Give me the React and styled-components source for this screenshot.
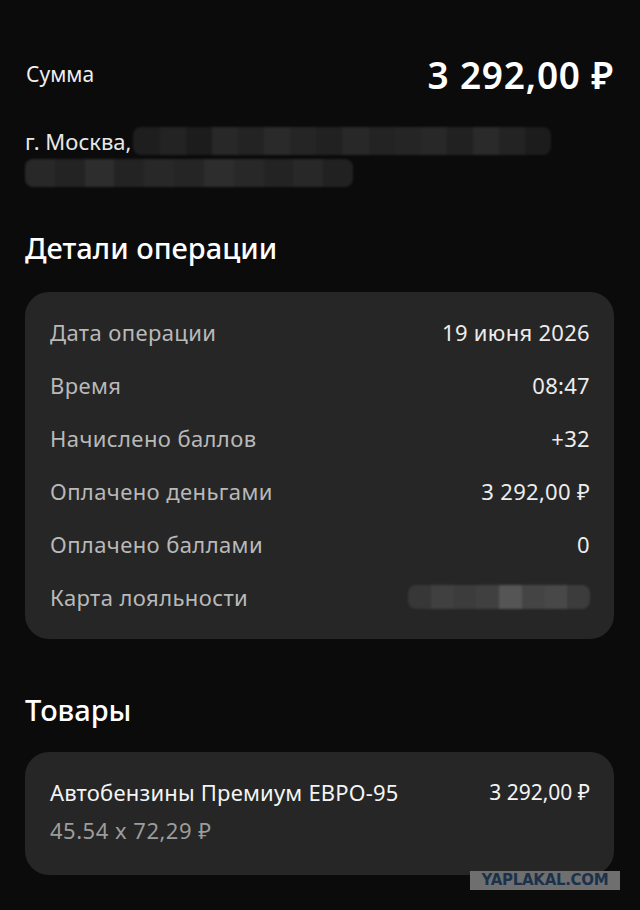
import styled, { createGlobalStyle } from 'styled-components';

const GlobalStyle = createGlobalStyle`
   html, body {
      margin: 0;
      background: #0b0b0b;
   }
   body {
      font-family: "Noto Sans", "Open Sans", sans-serif;
      color: #f2f2f2;
   }
`;

const details = [
   { label: 'Дата операции', value: '19 июня 2026' },
   { label: 'Время', value: '08:47' },
   { label: 'Начислено баллов', value: '+32' },
   { label: 'Оплачено деньгами', value: '3 292,00 ₽' },
   { label: 'Оплачено баллами', value: '0' },
   { label: 'Карта лояльности', hidden: true },
];

const addressBlur = [0.08, 0.1, 0.07, 0.12, 0.1, 0.13, 0.11, 0.09, 0.12, 0.1, 0.11, 0.12, 0.09, 0.13, 0.1, 0.07];
const addressBlur2 = [0.12, 0.1, 0.14, 0.1, 0.12, 0.11, 0.14, 0.12, 0.1, 0.12, 0.09];
const cardBlur = [0.08, 0.12, 0.1, 0.12, 0.22, 0.14, 0.16, 0.1];

function Blur({ cells, width, height }) {
   return (
      <Smudge $w={width} $h={height}>
         {cells.map((c, i) => (
            <Cell key={i} style={{ background: `rgba(255,255,255,${c})` }} />
         ))}
      </Smudge>
   );
}

function App() {
   return (
      <>
         <GlobalStyle />
         <Page>
            <SumRow>
               <SumLabel>Сумма</SumLabel>
               <SumValue>3 292,00 ₽</SumValue>
            </SumRow>

            <Address>
               <AddressLine>
                  <span>г. Москва,</span>
                  <Blur cells={addressBlur} width={418} height={28} />
               </AddressLine>
               <Blur cells={addressBlur2} width={328} height={28} />
            </Address>

            <Heading $top={41}>Детали операции</Heading>
            <Card>
               {details.map((d) => (
                  <Row key={d.label}>
                     <Label>{d.label}</Label>
                     {d.hidden ? (
                        <Blur cells={cardBlur} width={182} height={24} />
                     ) : (
                        <Value>{d.value}</Value>
                     )}
                  </Row>
               ))}
            </Card>

            <Heading $top={51}>Товары</Heading>
            <Card $compact>
               <ItemTop>
                  <ItemName>Автобензины Премиум ЕВРО-95</ItemName>
                  <ItemPrice>3 292,00 ₽</ItemPrice>
               </ItemTop>
               <ItemSub>45.54 x 72,29 ₽</ItemSub>
            </Card>

            <Watermark>YAPLAKAL.COM</Watermark>
         </Page>
      </>
   );
}
export default App;

const Page = styled.div`
   position: relative;
   width: 640px;
   height: 910px;
   box-sizing: border-box;
   padding: 54px 26px 0 25px;
   background: #0b0b0b;
   overflow: hidden;
`;

const SumRow = styled.div`
   display: flex;
   justify-content: space-between;
   align-items: center;
   height: 40px;
`;

const SumLabel = styled.span`
   font-size: 21px;
   color: #f0f0f0;
   padding-left: 1px;
`;

const SumValue = styled.span`
   font-size: 37px;
   font-weight: 600;
   color: #ffffff;
   letter-spacing: 0.8px;
`;

const Address = styled.div`
   margin-top: 33px;
   display: flex;
   flex-direction: column;
   gap: 4px;
`;

const AddressLine = styled.div`
   display: flex;
   align-items: center;
   gap: 2px;
   font-size: 22px;
   color: #e8e8e8;
   height: 28px;
`;

const Smudge = styled.div`
   display: flex;
   width: ${(p) => p.$w}px;
   height: ${(p) => p.$h}px;
   border-radius: 8px;
   overflow: hidden;
   filter: blur(1px);
`;

const Cell = styled.div`
   flex: 1;
`;

const Heading = styled.h2`
   margin: ${(p) => p.$top}px 0 0 0;
   font-size: 29px;
   font-weight: 500;
   color: #ffffff;
   line-height: 40px;
`;

const Card = styled.div`
   margin-top: ${(p) => (p.$compact ? 22 : 24)}px;
   background: #262626;
   border-radius: 24px;
   padding: ${(p) => (p.$compact ? '22px 24px 28px 25px' : '13px 24px 16px 25px')};
`;

const Row = styled.div`
   display: flex;
   justify-content: space-between;
   align-items: center;
   height: 53px;
`;

const Label = styled.span`
   font-size: 22px;
   color: #b9b9b9;
   letter-spacing: 0.4px;
`;

const Value = styled.span`
   font-size: 22px;
   color: #ececec;
   letter-spacing: 0.3px;
`;

const ItemTop = styled.div`
   display: flex;
   justify-content: space-between;
   align-items: center;
   height: 36px;
`;

const ItemName = styled.span`
   font-size: 22px;
   color: #f4f4f4;
   letter-spacing: 0.2px;
`;

const ItemPrice = styled.span`
   font-size: 21px;
   color: #f4f4f4;
`;

const ItemSub = styled.div`
   margin-top: 3px;
   font-size: 22px;
   color: #9c9c9c;
   line-height: 34px;
   letter-spacing: 0.5px;
`;

const Watermark = styled.div`
   position: absolute;
   left: 470px;
   top: 871px;
   width: 150px;
   height: 19px;
   background: #6f6f6f;
   color: #1b324c;
   font-family: "DejaVu Sans", sans-serif;
   font-weight: 900;
   font-size: 15px;
   line-height: 19px;
   text-align: center;
   letter-spacing: -0.3px;
   transform-origin: center;
`;
